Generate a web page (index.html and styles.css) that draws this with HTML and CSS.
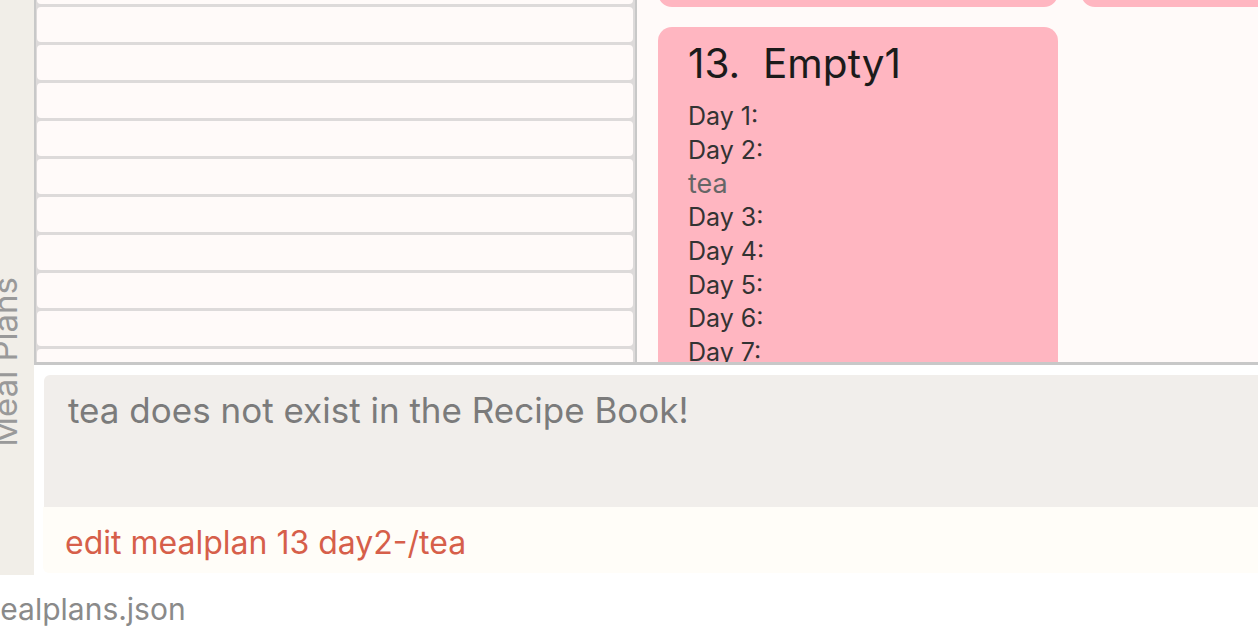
FILE: index.html
```html
<!DOCTYPE html>
<html lang="en">
<head>
<meta charset="utf-8">
<title>Meal Plans</title>
<link rel="stylesheet" href="styles.css">
</head>
<body>
<div class="app">
  <div class="main">
    <aside class="sidebar"><span class="tab-label">Meal Plans</span></aside>
    <div class="content">
      <div class="panes">
        <div class="list">
          <div class="list-inner">
            <div class="row"></div><div class="row"></div><div class="row"></div>
            <div class="row"></div><div class="row"></div><div class="row"></div>
            <div class="row"></div><div class="row"></div><div class="row"></div>
            <div class="row"></div><div class="row"></div>
          </div>
        </div>
        <div class="cards">
          <div class="cards-inner">
            <div class="card"></div>
            <div class="card"></div>
            <div class="card">
              <div class="card-title">13.&nbsp; Empty1</div>
              <div class="day">Day 1:</div>
              <div class="day">Day 2:</div>
              <div class="meal">tea</div>
              <div class="day">Day 3:</div>
              <div class="day">Day 4:</div>
              <div class="day">Day 5:</div>
              <div class="day">Day 6:</div>
              <div class="day">Day 7:</div>
            </div>
          </div>
        </div>
      </div>
      <div class="result">tea does not exist in the Recipe Book!</div>
      <div class="command">edit mealplan 13 day2-/tea</div>
    </div>
  </div>
  <div class="status">mealplans.json</div>
</div>
</body>
</html>
```
FILE: styles.css
```css
html, body {
  margin: 0;
  padding: 0;
}
body {
  font-family: Inter, "Noto Sans", sans-serif;
  background: #ffffff;
  overflow: hidden;
}
.app {
  width: 1258px;
  height: 636px;
  display: flex;
  flex-direction: column;
}
.main {
  height: 577px;
  display: flex;
  flex-shrink: 0;
}
.sidebar {
  width: 34px;
  height: 575px;
  flex-shrink: 0;
  background: #f1eee8;
  overflow: hidden;
  padding-top: 277px;
  box-sizing: border-box;
}
.tab-label {
  display: block;
  writing-mode: vertical-rl;
  transform: rotate(180deg);
  font-size: 33px;
  line-height: 40px;
  width: 40px;
  margin-left: -15px;
  color: #999999;
  white-space: nowrap;
}
.content {
  flex: 1;
  min-width: 0;
  display: flex;
  flex-direction: column;
  background: #ffffff;
  border-bottom-left-radius: 8px;
}
.panes {
  height: 365px;
  box-sizing: border-box;
  border-left: 2px solid #c8c8c8;
  border-bottom: 3px solid #c8c8c8;
  display: flex;
  overflow: hidden;
  flex-shrink: 0;
}
.list {
  width: 601px;
  box-sizing: border-box;
  flex-shrink: 0;
  background: #dddada;
  border-right: 2px solid #c8c8c8;
  padding: 0 2px 0 1px;
  overflow: hidden;
}
.list-inner {
  margin-top: -31px;
  display: flex;
  flex-direction: column;
  gap: 3px;
}
.row {
  height: 35px;
  flex-shrink: 0;
  background: #fffaf9;
  border-radius: 4px;
}
.cards {
  flex: 1;
  background: #fffaf9;
  overflow: hidden;
  padding-left: 21px;
}
.cards-inner {
  display: grid;
  grid-template-columns: 400px 400px;
  column-gap: 23px;
  row-gap: 20px;
  margin-top: -373px;
}
.card {
  height: 380px;
  box-sizing: border-box;
  background: #ffb6c1;
  border-radius: 14px;
  padding: 13px 30px;
}
.card-title {
  font-size: 40.5px;
  line-height: 48px;
  color: #1b1b1b;
  margin-bottom: 12px;
  white-space: nowrap;
}
.day {
  font-size: 25px;
  line-height: 33.7px;
  color: #333333;
}
.meal {
  font-size: 27px;
  line-height: 33.7px;
  color: #666666;
}
.result {
  margin: 10px 0 0 10px;
  height: 132px;
  box-sizing: border-box;
  flex-shrink: 0;
  background: #f1eeeb;
  border-top-left-radius: 6px;
  padding: 15px 24px;
  font-size: 35px;
  line-height: 40px;
  color: #7b7b7b;
  white-space: nowrap;
}
.command {
  margin-left: 9px;
  height: 66px;
  box-sizing: border-box;
  flex-shrink: 0;
  background: #fffdf8;
  border-bottom-left-radius: 6px;
  padding: 18px 22px;
  font-size: 32px;
  line-height: 36px;
  color: #d65f4a;
  white-space: nowrap;
}
.status {
  height: 59px;
  box-sizing: border-box;
  padding-top: 14px;
  font-size: 30px;
  line-height: 36px;
  color: #8a8a8a;
  text-indent: -26px;
  white-space: nowrap;
  overflow: hidden;
}
```
